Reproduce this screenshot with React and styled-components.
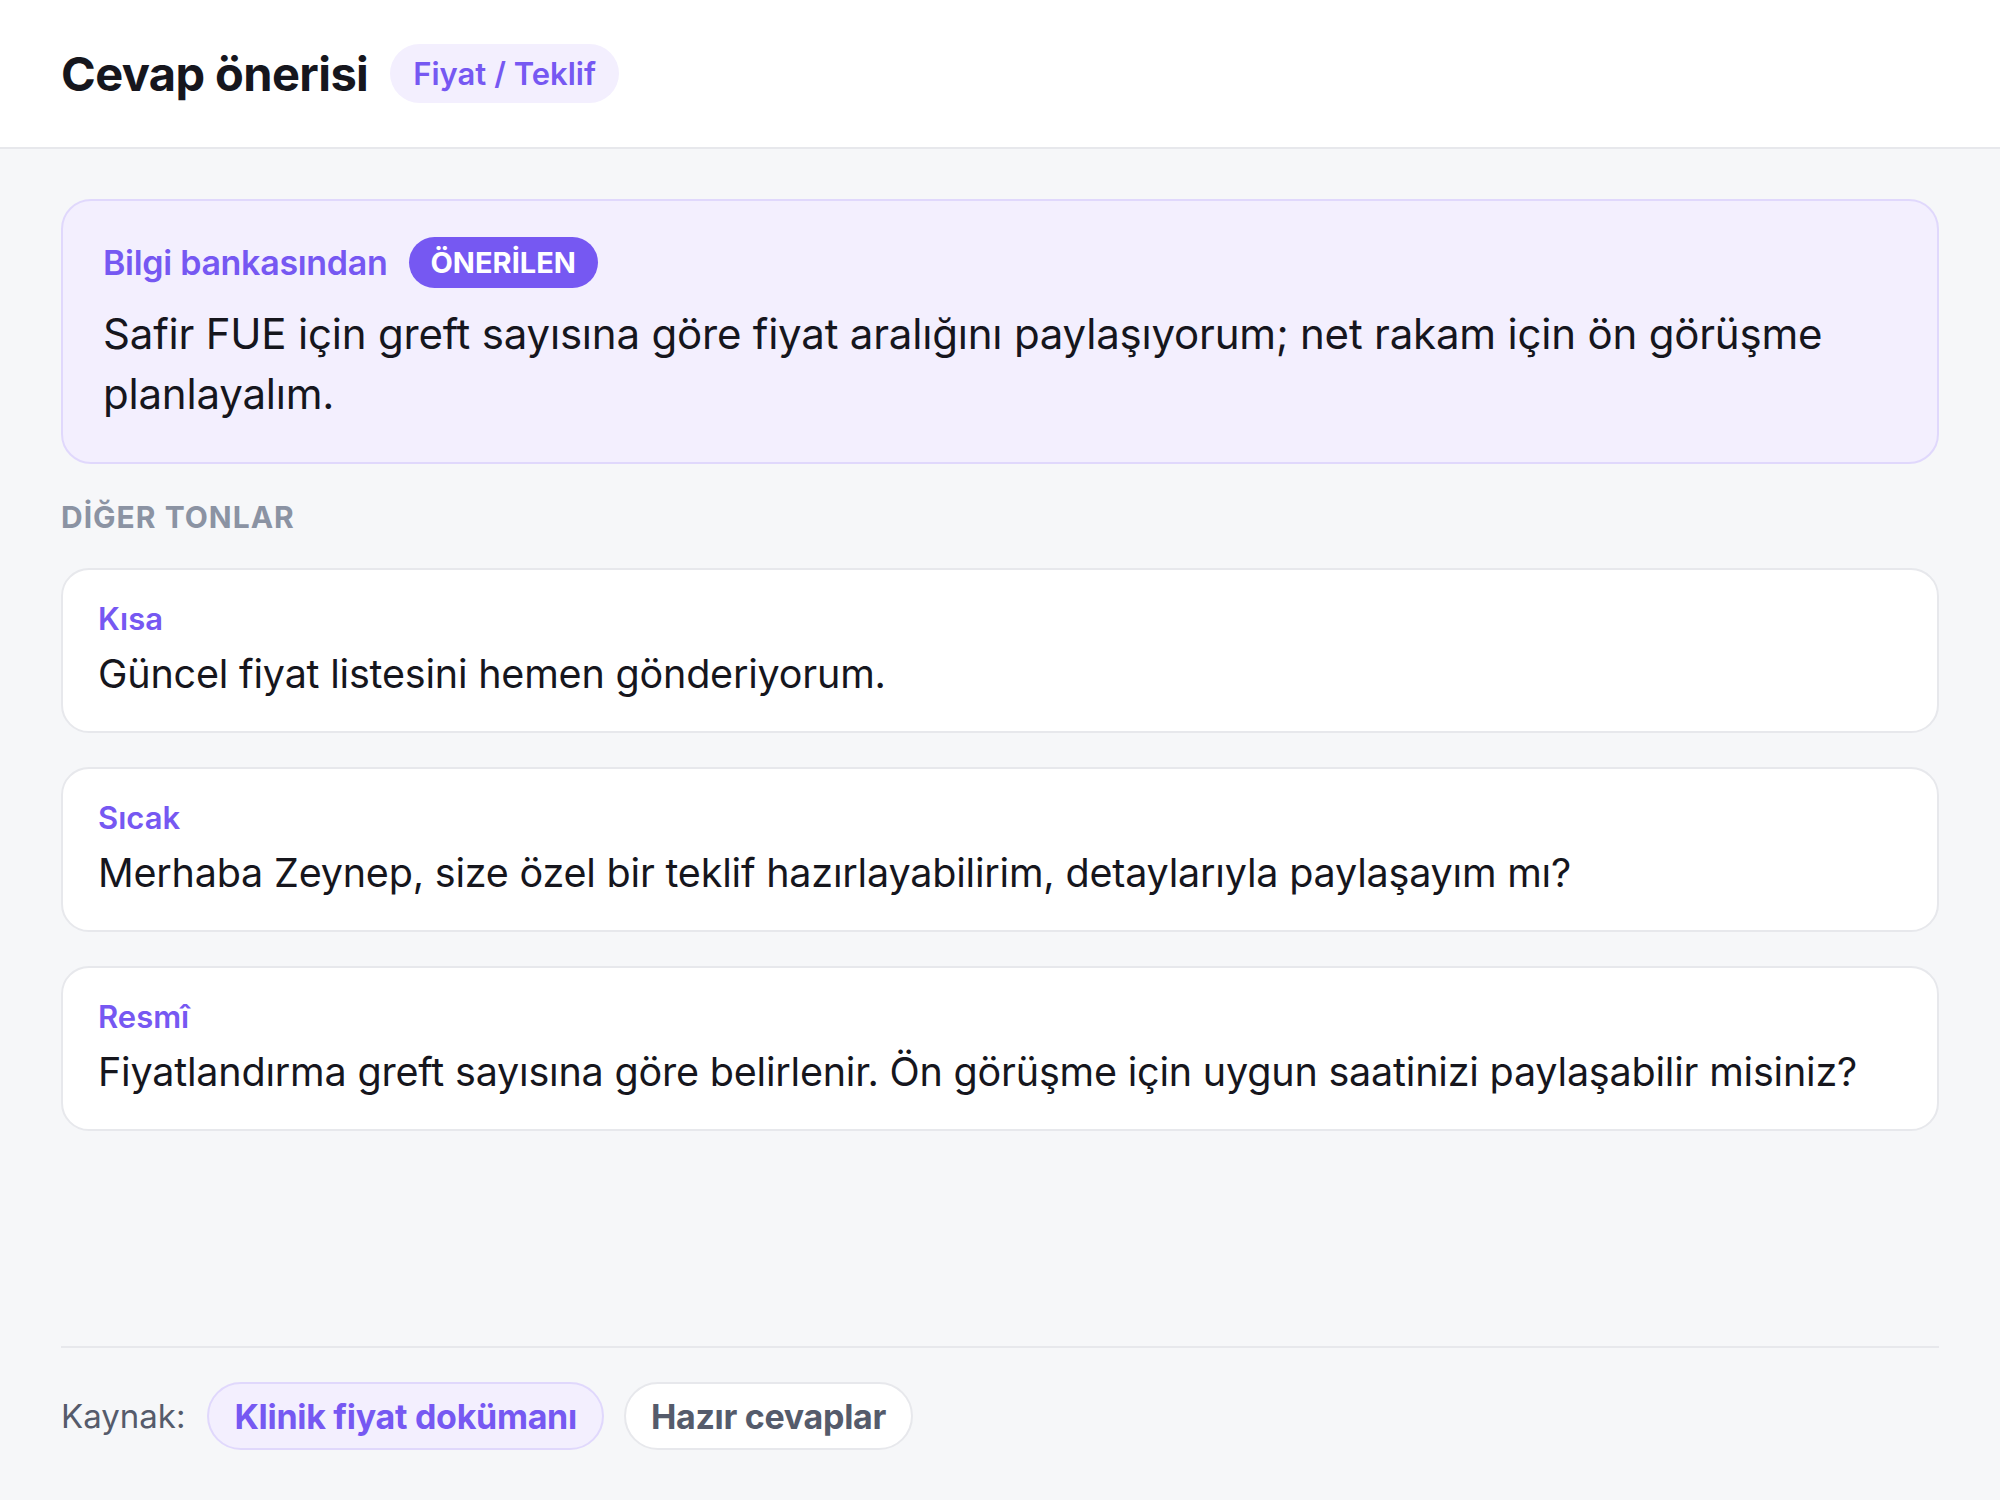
import React from "react";
import styled, { createGlobalStyle } from "styled-components";

const colors = {
  page: "#f6f7f9",
  ink: "#16161d",
  purple: "#7658f2",
  purpleSoft: "#f3effe",
  purpleLine: "#e0d8fc",
  line: "#e7e8ec",
  muted: "#8b93a3",
  slate: "#555b6b",
};

const GlobalStyle = createGlobalStyle`
  html, body {
    margin: 0;
    padding: 0;
    background: ${colors.page};
    font-family: Inter, "Noto Sans", sans-serif;
    color: ${colors.ink};
  }
  * { box-sizing: border-box; }
`;

const Page = styled.div`
  display: flex;
  flex-direction: column;
  min-height: 100vh;
`;

const Header = styled.header`
  display: flex;
  align-items: center;
  gap: 22px;
  height: 149px;
  padding: 0 61px;
  background: #fff;
  border-bottom: 2px solid ${colors.line};
`;

const Title = styled.h1`
  margin: 0;
  font-size: 47px;
  font-weight: 700;
  letter-spacing: -0.6px;
`;

const Tag = styled.span`
  display: inline-flex;
  align-items: center;
  height: 59px;
  padding: 0 23px;
  border-radius: 30px;
  background: ${colors.purpleSoft};
  color: ${colors.purple};
  font-size: 31px;
  font-weight: 600;
`;

const Main = styled.main`
  flex: 1;
  display: flex;
  flex-direction: column;
  padding: 50px 61px 50px;
`;

const Suggestion = styled.section`
  padding: 36px 40px 38px;
  border: 2px solid ${colors.purpleLine};
  border-radius: 30px;
  background: ${colors.purpleSoft};
`;

const SourceRow = styled.div`
  display: flex;
  align-items: center;
  gap: 21px;
  margin-bottom: 16px;
`;

const SourceLabel = styled.span`
  color: ${colors.purple};
  font-size: 34px;
  font-weight: 600;
  letter-spacing: -0.3px;
`;

const Badge = styled.span`
  display: inline-flex;
  align-items: center;
  height: 51px;
  padding: 0 22px;
  border-radius: 26px;
  background: ${colors.purple};
  color: #fff;
  font-size: 29px;
  font-weight: 700;
`;

const SuggestionText = styled.p`
  margin: 0;
  font-size: 42px;
  line-height: 60px;
  letter-spacing: -0.2px;
`;

const SectionTitle = styled.h2`
  margin: 35px 0 33px;
  color: ${colors.muted};
  font-size: 30px;
  font-weight: 700;
  letter-spacing: 1px;
`;

const ToneList = styled.div`
  display: flex;
  flex-direction: column;
  gap: 34px;
`;

const ToneCard = styled.article`
  padding: 30px 35px 30px;
  border: 2px solid ${colors.line};
  border-radius: 28px;
  background: #fff;
`;

const ToneName = styled.div`
  color: ${colors.purple};
  font-size: 31px;
  font-weight: 600;
  line-height: 38px;
  margin-bottom: 9px;
`;

const ToneText = styled.p`
  margin: 0;
  font-size: 39.5px;
  line-height: 54px;
  letter-spacing: -0.2px;
`;

const Footer = styled.footer`
  margin-top: auto;
  display: flex;
  align-items: center;
  gap: 20px;
  padding-top: 34px;
  border-top: 2px solid ${colors.line};
`;

const FooterLabel = styled.span`
  color: ${colors.slate};
  font-size: 33px;
  margin-right: 2px;
`;

const Chip = styled.span`
  display: inline-flex;
  align-items: center;
  height: 68px;
  padding: 0 25px;
  border-radius: 34px;
  border: 2px solid ${(p) => (p.$active ? colors.purpleLine : colors.line)};
  background: ${(p) => (p.$active ? colors.purpleSoft : "#fff")};
  color: ${(p) => (p.$active ? colors.purple : colors.slate)};
  font-size: 34px;
  font-weight: 700;
  letter-spacing: -0.3px;
`;

const tones = [
  { name: "Kısa", text: "Güncel fiyat listesini hemen gönderiyorum." },
  {
    name: "Sıcak",
    text: "Merhaba Zeynep, size özel bir teklif hazırlayabilirim, detaylarıyla paylaşayım mı?",
  },
  {
    name: "Resmî",
    text: "Fiyatlandırma greft sayısına göre belirlenir. Ön görüşme için uygun saatinizi paylaşabilir misiniz?",
  },
];

export default function App() {
  return (
    <Page>
      <GlobalStyle />
      <Header>
        <Title>Cevap önerisi</Title>
        <Tag>Fiyat / Teklif</Tag>
      </Header>
      <Main>
        <Suggestion>
          <SourceRow>
            <SourceLabel>Bilgi bankasından</SourceLabel>
            <Badge>ÖNERİLEN</Badge>
          </SourceRow>
          <SuggestionText>
            Safir FUE için greft sayısına göre fiyat aralığını paylaşıyorum; net rakam için ön görüşme
            planlayalım.
          </SuggestionText>
        </Suggestion>

        <SectionTitle>DİĞER TONLAR</SectionTitle>

        <ToneList>
          {tones.map((tone) => (
            <ToneCard key={tone.name}>
              <ToneName>{tone.name}</ToneName>
              <ToneText>{tone.text}</ToneText>
            </ToneCard>
          ))}
        </ToneList>

        <Footer>
          <FooterLabel>Kaynak:</FooterLabel>
          <Chip $active>Klinik fiyat dokümanı</Chip>
          <Chip>Hazır cevaplar</Chip>
        </Footer>
      </Main>
    </Page>
  );
}
